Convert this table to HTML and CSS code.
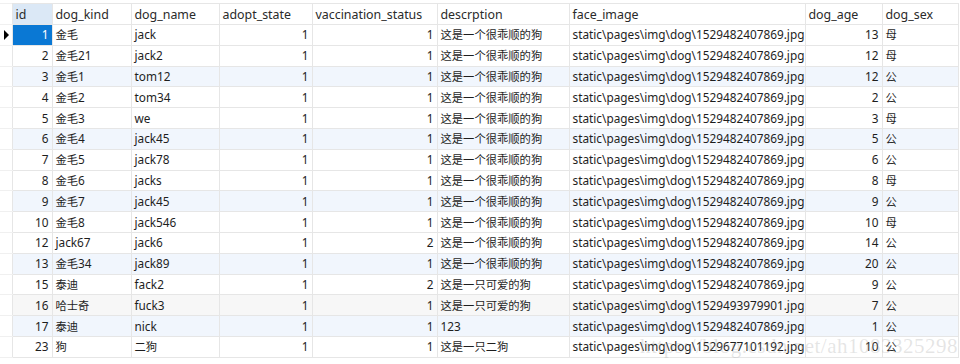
FILE: index.html
```html
<!DOCTYPE html>
<html lang="zh-CN">
<head>
  <meta charset="UTF-8">
  <title>dog</title>
  <link rel="stylesheet" href="styles.css">
</head>
<body>
  <div class="grid">
    <table>
      <colgroup>
        <col class="c-mark"><col class="c-id"><col class="c-kind"><col class="c-name"><col class="c-adopt">
        <col class="c-vacc"><col class="c-desc"><col class="c-face"><col class="c-age"><col class="c-sex">
      </colgroup>
      <thead>
        <tr>
          <th class="mark"></th>
          <th class="sel-col">id</th>
          <th>dog_kind</th>
          <th>dog_name</th>
          <th>adopt_state</th>
          <th>vaccination_status</th>
          <th>descrption</th>
          <th>face_image</th>
          <th>dog_age</th>
          <th>dog_sex</th>
        </tr>
      </thead>
      <tbody>
        <tr><td class="mark"><span class="arrow"></span></td><td class="num current">1</td><td><span class="zh">金毛</span></td><td>jack</td><td class="num">1</td><td class="num">1</td><td><span class="zh">这是一个很乖顺的狗</span></td><td>static\pages\img\dog\1529482407869.jpg</td><td class="num">13</td><td><span class="zh">母</span></td></tr>
        <tr><td class="mark"></td><td class="num">2</td><td><span class="zh">金毛</span>21</td><td>jack2</td><td class="num">1</td><td class="num">1</td><td><span class="zh">这是一个很乖顺的狗</span></td><td>static\pages\img\dog\1529482407869.jpg</td><td class="num">12</td><td><span class="zh">母</span></td></tr>
        <tr class="alt"><td class="mark"></td><td class="num">3</td><td><span class="zh">金毛</span>1</td><td>tom12</td><td class="num">1</td><td class="num">1</td><td><span class="zh">这是一个很乖顺的狗</span></td><td>static\pages\img\dog\1529482407869.jpg</td><td class="num">12</td><td><span class="zh">公</span></td></tr>
        <tr><td class="mark"></td><td class="num">4</td><td><span class="zh">金毛</span>2</td><td>tom34</td><td class="num">1</td><td class="num">1</td><td><span class="zh">这是一个很乖顺的狗</span></td><td>static\pages\img\dog\1529482407869.jpg</td><td class="num">2</td><td><span class="zh">公</span></td></tr>
        <tr><td class="mark"></td><td class="num">5</td><td><span class="zh">金毛</span>3</td><td>we</td><td class="num">1</td><td class="num">1</td><td><span class="zh">这是一个很乖顺的狗</span></td><td>static\pages\img\dog\1529482407869.jpg</td><td class="num">3</td><td><span class="zh">母</span></td></tr>
        <tr class="alt"><td class="mark"></td><td class="num">6</td><td><span class="zh">金毛</span>4</td><td>jack45</td><td class="num">1</td><td class="num">1</td><td><span class="zh">这是一个很乖顺的狗</span></td><td>static\pages\img\dog\1529482407869.jpg</td><td class="num">5</td><td><span class="zh">公</span></td></tr>
        <tr><td class="mark"></td><td class="num">7</td><td><span class="zh">金毛</span>5</td><td>jack78</td><td class="num">1</td><td class="num">1</td><td><span class="zh">这是一个很乖顺的狗</span></td><td>static\pages\img\dog\1529482407869.jpg</td><td class="num">6</td><td><span class="zh">公</span></td></tr>
        <tr><td class="mark"></td><td class="num">8</td><td><span class="zh">金毛</span>6</td><td>jacks</td><td class="num">1</td><td class="num">1</td><td><span class="zh">这是一个很乖顺的狗</span></td><td>static\pages\img\dog\1529482407869.jpg</td><td class="num">8</td><td><span class="zh">母</span></td></tr>
        <tr class="alt"><td class="mark"></td><td class="num">9</td><td><span class="zh">金毛</span>7</td><td>jack45</td><td class="num">1</td><td class="num">1</td><td><span class="zh">这是一个很乖顺的狗</span></td><td>static\pages\img\dog\1529482407869.jpg</td><td class="num">9</td><td><span class="zh">公</span></td></tr>
        <tr><td class="mark"></td><td class="num">10</td><td><span class="zh">金毛</span>8</td><td>jack546</td><td class="num">1</td><td class="num">1</td><td><span class="zh">这是一个很乖顺的狗</span></td><td>static\pages\img\dog\1529482407869.jpg</td><td class="num">10</td><td><span class="zh">母</span></td></tr>
        <tr><td class="mark"></td><td class="num">12</td><td>jack67</td><td>jack6</td><td class="num">1</td><td class="num">2</td><td><span class="zh">这是一个很乖顺的狗</span></td><td>static\pages\img\dog\1529482407869.jpg</td><td class="num">14</td><td><span class="zh">公</span></td></tr>
        <tr class="alt"><td class="mark"></td><td class="num">13</td><td><span class="zh">金毛</span>34</td><td>jack89</td><td class="num">1</td><td class="num">1</td><td><span class="zh">这是一个很乖顺的狗</span></td><td>static\pages\img\dog\1529482407869.jpg</td><td class="num">20</td><td><span class="zh">公</span></td></tr>
        <tr><td class="mark"></td><td class="num">15</td><td><span class="zh">泰迪</span></td><td>fack2</td><td class="num">1</td><td class="num">2</td><td><span class="zh">这是一只可爱的狗</span></td><td>static\pages\img\dog\1529482407869.jpg</td><td class="num">9</td><td><span class="zh">公</span></td></tr>
        <tr class="grey"><td class="mark"></td><td class="num">16</td><td><span class="zh">哈士奇</span></td><td>fuck3</td><td class="num">1</td><td class="num">1</td><td><span class="zh">这是一只可爱的狗</span></td><td>static\pages\img\dog\1529493979901.jpg</td><td class="num">7</td><td><span class="zh">公</span></td></tr>
        <tr class="alt"><td class="mark"></td><td class="num">17</td><td><span class="zh">泰迪</span></td><td>nick</td><td class="num">1</td><td class="num">1</td><td>123</td><td>static\pages\img\dog\1529482407869.jpg</td><td class="num">1</td><td><span class="zh">公</span></td></tr>
        <tr><td class="mark"></td><td class="num">23</td><td><span class="zh">狗</span></td><td><span class="zh">二狗</span></td><td class="num">1</td><td class="num">1</td><td><span class="zh">这是一只二狗</span></td><td>static\pages\img\dog\1529677101192.jpg</td><td class="num">10</td><td><span class="zh">公</span></td></tr>
      </tbody>
    </table>
    <div class="watermark">https://blog.csdn.net/ah1083325298</div>
  </div>
</body>
</html>
```

FILE: styles.css
```css
body {
  margin: 0;
  background: #ffffff;
  font-family: "Noto Sans", "Noto Sans CJK SC", sans-serif;
  font-size: 11.8px;
  color: #1e1e1e;
}
.grid {
  position: relative;
  width: 960px;
  height: 364px;
  padding-top: 3px;
  box-sizing: border-box;
  overflow: hidden;
}
table {
  border-collapse: collapse;
  table-layout: fixed;
  width: 958px;
}
.c-mark { width: 12px; }
.c-id { width: 40px; }
.c-kind { width: 79px; }
.c-name { width: 88px; }
.c-adopt { width: 93px; }
.c-vacc { width: 125px; }
.c-desc { width: 132px; }
.c-face { width: 236px; }
.c-age { width: 77px; }
.c-sex { width: 76px; }
th, td {
  border: 1px solid #e6e6e6;
  padding: 0 3px;
  white-space: nowrap;
  overflow: hidden;
  text-align: left;
  font-weight: normal;
}
th {
  height: 20px;
  color: #2a2a2a;
  font-size: 12.4px;
}
td {
  height: 19.8px;
  line-height: 19px;
}
.zh {
  font-family: "Noto Sans CJK SC", sans-serif;
  font-size: 11.3px;
}
th.sel-col {
  background: #dbe8f6;
}
.mark {
  padding: 0;
  border-top-color: #f0f0f0;
  border-bottom-color: #f0f0f0;
  border-left: none;
}
.num {
  text-align: right;
}
td.current {
  background: #0a78d4;
  color: #ffffff;
}
tr.alt td {
  background: #f1f6fd;
}
tr.grey td {
  background: #f7f7f7;
}
tr td.mark {
  background: #ffffff;
}
.arrow {
  display: block;
  width: 0;
  height: 0;
  margin-left: 4px;
  border-top: 5px solid transparent;
  border-bottom: 5px solid transparent;
  border-left: 5px solid #000000;
}
.watermark {
  position: absolute;
  right: 2px;
  top: 334px;
  font-family: "Liberation Serif", serif;
  font-size: 21px;
  color: rgba(150, 150, 150, 0.25);
  letter-spacing: 0.5px;
  pointer-events: none;
}
```
